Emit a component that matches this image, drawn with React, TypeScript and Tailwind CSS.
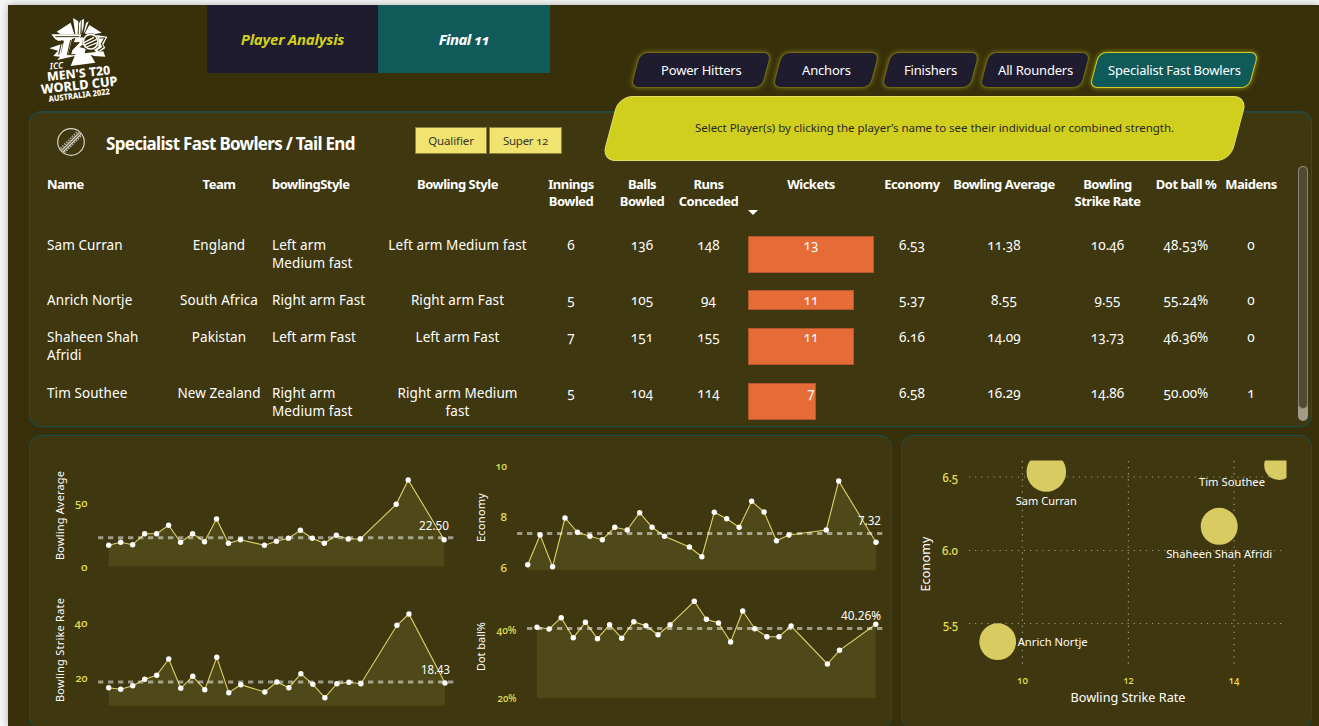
import React from "react";

const DAYS = [0, 1, 2, 3, 4, 5, 6, 7, 8, 9, 10, 11, 13, 14, 15, 16, 17, 18, 19, 20, 21, 24, 25, 28];

type Tick = { label: string; y: number; w: number };
type Trend = {
  box: string;
  width: number;
  height: number;
  x0: number;
  step: number;
  base: number;
  ys: number[];
  avg: { x1: number; x2: number; y: number; label: string; lx: number; ly: number; lw: number };
  title: { text: string; x: number; y: number; len: number };
  tickX: number;
  ticks: Tick[];
};

const TRENDS: Trend[] = [
  {
    box: "30 436 430 146", width: 430, height: 146, x0: 108.7, step: 11.98, base: 566.5,
    ys: [545.3, 542.3, 544.7, 533.7, 533.7, 525.3, 542.3, 533.7, 541.7, 519, 543.3, 539.7, 545.3, 541.3, 538.3, 530.3, 538.3, 543.3, 535.3, 539, 539, 504.3, 480, 539.7],
    avg: { x1: 98, x2: 455, y: 537.8, label: "22.50", lx: 449, ly: 530, lw: 30 },
    title: { text: "Bowling Average", x: 64, y: 560, len: 89 },
    tickX: 87.5,
    ticks: [{ label: "50", y: 507, w: 12.5 }, { label: "0", y: 570.5, w: 6.5 }],
  },
  {
    box: "460 436 431 146", width: 431, height: 146, x0: 527.7, step: 12.44, base: 570.2,
    ys: [564.7, 535, 566.7, 518, 532.3, 536.3, 539.7, 527.3, 530, 512.7, 527.3, 536.3, 547, 556.7, 512.3, 518.7, 527.3, 501.3, 512, 540.7, 535, 530, 481, 542.3],
    avg: { x1: 517, x2: 886, y: 533.5, label: "7.32", lx: 881, ly: 525, lw: 23 },
    title: { text: "Economy", x: 485, y: 542, len: 49 },
    tickX: 507,
    ticks: [{ label: "10", y: 470, w: 11.5 }, { label: "8", y: 521, w: 6.5 }, { label: "6", y: 572, w: 6.5 }],
  },
  {
    box: "30 582 430 146", width: 430, height: 146, x0: 108.7, step: 12.01, base: 705.8,
    ys: [687.7, 689.3, 685.7, 679.3, 675.3, 659, 688.3, 676.3, 689.7, 657.3, 692.7, 684.7, 692, 682, 687.7, 673.7, 684.3, 697.7, 683.7, 682.3, 683.7, 625.3, 614, 683],
    avg: { x1: 98, x2: 456, y: 682, label: "18.43", lx: 450, ly: 674, lw: 29 },
    title: { text: "Bowling Strike Rate", x: 64, y: 702, len: 104 },
    tickX: 87.5,
    ticks: [{ label: "40", y: 627, w: 13 }, { label: "20", y: 682, w: 12 }],
  },
  {
    box: "460 582 431 146", width: 431, height: 146, x0: 537, step: 12.1, base: 698,
    ys: [627.3, 629, 617.7, 637.7, 622.3, 638.7, 624.7, 638.3, 621.7, 625.7, 634.7, 624.7, 601.3, 619.3, 623, 642, 611, 628.7, 636.7, 636.7, 626, 664, 650.3, 624.3],
    avg: { x1: 527, x2: 886, y: 628.5, label: "40.26%", lx: 881, ly: 620, lw: 40 },
    title: { text: "Dot ball%", x: 485, y: 671, len: 49 },
    tickX: 516.5,
    ticks: [{ label: "40%", y: 634, w: 20 }, { label: "20%", y: 702, w: 19 }],
  },
];

function TrendChart({ t }: { t: Trend }) {
  const pts = t.ys.map((y, i) => [t.x0 + DAYS[i] * t.step, y]);
  const line = pts.map((p) => p.join(",")).join(" ");
  const last = pts[pts.length - 1][0];
  return (
    <svg viewBox={t.box} width={t.width} height={t.height} className="block">
      <polygon points={`${t.x0},${t.base} ${line} ${last},${t.base}`} fill="#f0e370" fillOpacity="0.1" />
      <polyline points={line} fill="none" stroke="#e0d264" strokeWidth="1.1" />
      <line x1={t.avg.x1} x2={t.avg.x2} y1={t.avg.y} y2={t.avg.y} stroke="#fff" strokeOpacity="0.5" strokeWidth="3" strokeDasharray="5.3 4.7" />
      {pts.map(([x, y], i) => (
        <circle key={i} cx={x} cy={y} r="2.7" fill="#fff" />
      ))}
      <text x={t.avg.lx} y={t.avg.ly} textAnchor="end" textLength={t.avg.lw} lengthAdjust="spacingAndGlyphs" className="fill-white text-[12px]">
        {t.avg.label}
      </text>
      {t.ticks.map((k) => (
        <text key={k.label} x={t.tickX} y={k.y} textAnchor="end" textLength={k.w} lengthAdjust="spacingAndGlyphs" className="fill-[#e8e052] text-[11px] font-medium oldstyle-nums">
          {k.label}
        </text>
      ))}
      <text transform={`translate(${t.title.x} ${t.title.y}) rotate(-90)`} textLength={t.title.len} className="fill-white text-[11px]">
        {t.title.text}
      </text>
    </svg>
  );
}

function ScatterChart() {
  const bubbles = [
    { x: 1046.3, y: 471.9, r: 19.8 },
    { x: 1279, y: 465.3, r: 14.8 },
    { x: 1219.2, y: 526.3, r: 18.5 },
    { x: 997.7, y: 641.7, r: 18.4 },
  ];
  const labels = [
    { t: "Sam Curran", x: 1046.3, y: 505, w: 61 },
    { t: "Tim Southee", x: 1232, y: 486, w: 66 },
    { t: "Shaheen Shah Afridi", x: 1219.2, y: 558, w: 106 },
    { t: "Anrich Nortje", x: 1052.7, y: 646, w: 70 },
  ];
  return (
    <svg viewBox="902 436 409 292" width="409" height="292" className="block">
      <defs>
        <clipPath id="plot">
          <rect x="960" y="460.5" width="326.5" height="220" />
        </clipPath>
      </defs>
      <g stroke="#fff" strokeOpacity="0.5" strokeWidth="1.2" strokeDasharray="1.2 4.9">
        <path d="M969 477H1283M969 550.5H1283M969 623.5H1283" />
        <path d="M1022.4 461V668M1128.4 461V668M1234.1 461V668" />
      </g>
      <g clipPath="url(#plot)" fill="#d8cb61">
        {bubbles.map((b, i) => (
          <circle key={i} cx={b.x} cy={b.y} r={b.r} />
        ))}
      </g>
      {labels.map((l) => (
        <text key={l.t} x={l.x} y={l.y} textAnchor="middle" textLength={l.w} lengthAdjust="spacingAndGlyphs" className="fill-white text-[11.5px]">
          {l.t}
        </text>
      ))}
      <g className="fill-[#e8e052] text-[12px] font-medium oldstyle-nums">
        <text x="958" y="481.5" textAnchor="end" textLength="15.5" lengthAdjust="spacingAndGlyphs">6.5</text>
        <text x="958" y="554.5" textAnchor="end" textLength="16" lengthAdjust="spacingAndGlyphs">6.0</text>
        <text x="958" y="628.5" textAnchor="end" textLength="15" lengthAdjust="spacingAndGlyphs">5.5</text>
      </g>
      <g className="fill-[#e8e052] text-[11px] font-medium oldstyle-nums">
        <text x="1022.4" y="684" textAnchor="middle" textLength="11" lengthAdjust="spacingAndGlyphs">10</text>
        <text x="1128.4" y="684" textAnchor="middle" textLength="10" lengthAdjust="spacingAndGlyphs">12</text>
        <text x="1234.1" y="684" textAnchor="middle" textLength="11" lengthAdjust="spacingAndGlyphs">14</text>
      </g>
      <text x="1128" y="702" textAnchor="middle" textLength="115" lengthAdjust="spacingAndGlyphs" className="fill-white text-[13px]">
        Bowling Strike Rate
      </text>
      <text transform="translate(930 591.5) rotate(-90)" textLength="55" className="fill-white text-[12.5px]">
        Economy
      </text>
    </svg>
  );
}

function Logo() {
  return (
    <svg viewBox="0 0 84 90" width="84" height="90" className="block">
      <g transform="translate(5 -2) scale(.3333)" fill="#fff">
        <path d="M38 53 80 26 91 61H50ZM87 12 103 22 101 60H94ZM105 28 111 18 109 60H104ZM113 18 120 15 119 36 113 60ZM126 27 134 22 124 50 119 58ZM136 33 173 56 150 61 122 59Z" />
        <path d="M22 61H112L108 74H84L72 122H50L60 80H42L34 76Z" />
        <path d="M16 103 46 92 56 90 50 120 84 120 92 104 120 118 178 112 184 128 150 126 140 122 154 146 80 156 92 126 40 138 48 128 28 126 42 110Z" />
        <path d="M92 74 116 70C124 72 124 84 116 92L106 100 126 102 122 118 82 120 86 106 104 86H88ZM152 62 190 68 178 92 184 102 160 118 150 108 164 98Z" />
        <path d="M34 68H106M54 78 44 122M80 78 70 122H94M92 72 88 86H106L80 112M112 98 130 106" stroke="#38300a" strokeWidth="3" fill="none" />
        <path d="M166 72H182L172 90 177 99 162 110" stroke="#38300a" strokeWidth="3.500" fill="none" />
        <circle cx="140" cy="83" r="25" fill="#38300a" />
        <circle cx="140" cy="83" r="22" fill="#38300a" stroke="#fff" strokeWidth="5" />
        <path d="M120 86 150 70M120 94 158 76M128 99 160 86" stroke="#fff" strokeWidth="4" />
      </g>
      <g fill="#fff" className="font-extrabold">
        <text transform="translate(11 53.500) rotate(-5)" textLength="13.500" lengthAdjust="spacingAndGlyphs" className="text-[9px] font-semibold italic">ICC</text>
        <text transform="translate(8.500 65) rotate(-6)" textLength="63.500" lengthAdjust="spacingAndGlyphs" className="text-[12.300px]">MEN'S T20</text>
        <text transform="translate(2.500 78) rotate(-6.500)" textLength="77" lengthAdjust="spacingAndGlyphs" className="text-[13px]">WORLD CUP</text>
        <text transform="translate(10 86) rotate(-7.200)" textLength="61.500" lengthAdjust="spacingAndGlyphs" className="text-[8.300px]">AUSTRALIA 2022</text>
      </g>
    </svg>
  );
}

function BallIcon() {
  return (
    <svg viewBox="0 0 30 30" width="30" height="30" className="block" fill="none" stroke="#d5d2c3">
      <circle cx="15" cy="15" r="13.300" strokeWidth="1.200" />
      <path d="M4.500 21.500 21.500 4.500M8.500 25.500 25.500 8.500" strokeWidth="1.800" strokeOpacity=".75" strokeDasharray="1.500 1.200" />
      <path d="M5.500 23.500 23.500 5.500M7 25 25 7" strokeWidth="1.300" />
    </svg>
  );
}

const NAV = [
  { label: "Power Hitters", box: "w-[132px] mr-[10px]", on: false },
  { label: "Anchors", box: "w-[98px] mr-[10.500px]", on: false },
  { label: "Finishers", box: "w-[88.500px] mr-[9.500px]", on: false },
  { label: "All Rounders", box: "w-[102px] mr-[8px]", on: false },
  { label: "Specialist Fast Bowlers", box: "w-[160px]", on: true },
];

const COLS = "grid grid-cols-[128px_88px_119px_151px_76px_66px_67px_138px_64px_120px_87px_70px_60px]";

const HEADS: string[][] = [
  ["Name"], ["Team"], ["bowlingStyle"], ["Bowling Style"], ["Innings", "Bowled"], ["Balls", "Bowled"], ["Runs", "Conceded"],
  ["Wickets"], ["Economy"], ["Bowling Average"], ["Bowling", "Strike Rate"], ["Dot ball %"], ["Maidens"],
];

const ROWS = [
  { h: "h-[55px]", bar: "w-[126px] h-[37px]", cells: [["Sam Curran"], ["England"], ["Left arm", "Medium fast"], ["Left arm Medium fast"], ["6"], ["136"], ["148"], ["13"], ["6.53"], ["11.38"], ["10.46"], ["48.53%"], ["0"]] },
  { h: "h-[37px]", bar: "w-[106px] h-[20px] -mt-px", cells: [["Anrich Nortje"], ["South Africa"], ["Right arm Fast"], ["Right arm Fast"], ["5"], ["105"], ["94"], ["11"], ["5.37"], ["8.55"], ["9.55"], ["55.24%"], ["0"]] },
  { h: "h-[56px]", bar: "w-[106px] h-[37px]", cells: [["Shaheen Shah", "Afridi"], ["Pakistan"], ["Left arm Fast"], ["Left arm Fast"], ["7"], ["151"], ["155"], ["11"], ["6.16"], ["14.09"], ["13.73"], ["46.36%"], ["0"]] },
  { h: "h-[37px]", bar: "w-[68px] h-[37px] -mt-px", cells: [["Tim Southee"], ["New Zealand"], ["Right arm", "Medium fast"], ["Right arm Medium", "fast"], ["5"], ["104"], ["114"], ["7"], ["6.58"], ["16.29"], ["14.86"], ["50.00%"], ["1"]] },
];

function Lines({ lines }: { lines: string[] }) {
  return (
    <>
      {lines.map((l) => (
        <span key={l} className="block whitespace-nowrap">{l}</span>
      ))}
    </>
  );
}

function align(i: number) {
  if (i === 0) return "flex flex-col items-start text-left";
  if (i === 2) return "flex flex-col items-start pl-[9px] text-left";
  return "flex flex-col items-center text-center";
}

export default function App() {
  return (
    <div className="flex h-[726px] w-[1319px] flex-col overflow-hidden bg-[#f7f7f7] pt-[5px] pl-2 font-['Noto_Sans',sans-serif] text-white">
      <div className="relative flex h-[721px] flex-none flex-col bg-[#38300a] shadow-[0_0_8px_rgba(0,0,0,0.3)]">
        <header className="flex h-[106px] flex-none items-start">
          <div className="w-[199px] pt-[11px] pl-[31px]">
            <Logo />
          </div>
          <div className="flex h-[68px] text-[15px] font-bold italic oldstyle-nums">
            <div className="flex w-[171px] items-center justify-center bg-[#1e1c2e] tracking-[-0.25px] text-[#d1cf1e]">Player Analysis</div>
            <div className="flex w-[172px] items-center justify-center bg-[#105a59] tracking-[-0.6px]">Final 11</div>
          </div>
          <nav className="flex pt-[47px] pl-[85px]">
            {NAV.map((n) => (
              <button
                key={n.label}
                className={`${n.box} flex h-9 flex-none -skew-x-[15deg] items-center justify-center rounded-[8px] border ${
                  n.on ? "border-[#d1cf1e] bg-[#105a59] shadow-[0_0_5px_rgba(209,207,30,0.7)]" : "border-[#6f6b12] bg-[#1e1c2e] shadow-[0_0_5px_rgba(209,207,30,0.45)]"
                }`}
              >
                <span className="skew-x-[15deg] pt-[2px] text-[13px] tracking-[-0.2px] whitespace-nowrap">{n.label}</span>
              </button>
            ))}
          </nav>
        </header>

        <section className="ml-[21px] h-[316px] w-[1283px] flex-none rounded-[12px] border border-t-2 border-[#17524c] border-t-[#26473a] bg-[#3e3710]">
          <div className="flex h-[53px] items-start">
            <div className="pt-[14px] pl-[26px]">
              <BallIcon />
            </div>
            <h1 className="w-[329px] pt-[19px] pl-[20px] text-[17px] leading-6 font-bold tracking-[-0.7px] whitespace-nowrap">Specialist Fast Bowlers / Tail End</h1>
            <div className="flex gap-[2px] pt-[14px] text-[11.5px] text-[#3a382a] oldstyle-nums">
              <div className="flex h-[27px] w-[72px] items-center justify-center border border-[#8d8344] bg-[#f0e370] tracking-[-0.1px]">Qualifier</div>
              <div className="flex h-[27px] w-[73px] items-center justify-center border border-[#8d8344] bg-[#f0e370] tracking-[-0.3px]">Super 12</div>
            </div>
          </div>
          <div className="flex">
            <div className="w-[1268px] pt-[10px] pl-[17px]">
              <div className={`${COLS} h-[60px] text-[13px] leading-[17px] font-bold tracking-[-0.5px]`}>
                {HEADS.map((h, i) => (
                  <div key={i} className={`relative ${align(i)}`}>
                    <Lines lines={h} />
                    {i === 7 && (
                      <svg viewBox="0 0 10 5" width="10" height="5" className="absolute top-[34px] left-[6px]">
                        <path d="M0 0H10L5 5Z" fill="#fff" />
                      </svg>
                    )}
                  </div>
                ))}
              </div>
              {ROWS.map((r, ri) => (
                <div key={ri} className={`${COLS} ${r.h} text-[13.5px] leading-[18px] tracking-[0.08px] oldstyle-nums`}>
                  {r.cells.map((c, i) => (
                    <div key={i} className={`relative ${align(i)}`}>
                      {i === 7 && <div className={`absolute top-0 left-[6px] ${r.bar} border border-[#b5572c] bg-[#e66c37]`} />}
                      <div className="relative"><Lines lines={c} /></div>
                    </div>
                  ))}
                </div>
              ))}
            </div>
            <div className="flex h-[255px] w-[10px] flex-none rounded-full bg-[#a09b86]">
              <div className="h-[243px] w-full rounded-full border border-[#8b866f] bg-[#514a34]" />
            </div>
          </div>
        </section>

        <div className="mt-2 ml-[21px] flex h-[294px] flex-none gap-[9px]">
          <section className="grid w-[863px] flex-none grid-cols-[430px_431px] content-start rounded-[12px] border border-[#1f4a41] border-t-[#17524c] bg-[#3e3710]">
            {TRENDS.map((t) => (
              <TrendChart key={t.title.text} t={t} />
            ))}
          </section>
          <section className="w-[411px] flex-none rounded-[12px] border border-[#1f4a41] border-t-[#17524c] bg-[#3e3710]">
            <ScatterChart />
          </section>
        </div>

        <div className="absolute top-[91px] left-[602px] flex h-[65px] w-[629px] -skew-x-[15deg] items-center justify-center rounded-[14px] border border-[#e3df62] bg-[#d1cf1e]">
          <p className="skew-x-[15deg] pb-[2px] pl-[20px] text-[11.5px] tracking-[-0.03px] whitespace-nowrap text-[#2a2823]">Select Player(s) by clicking the player’s name to see their individual or combined strength.</p>
        </div>
      </div>
    </div>
  );
}
